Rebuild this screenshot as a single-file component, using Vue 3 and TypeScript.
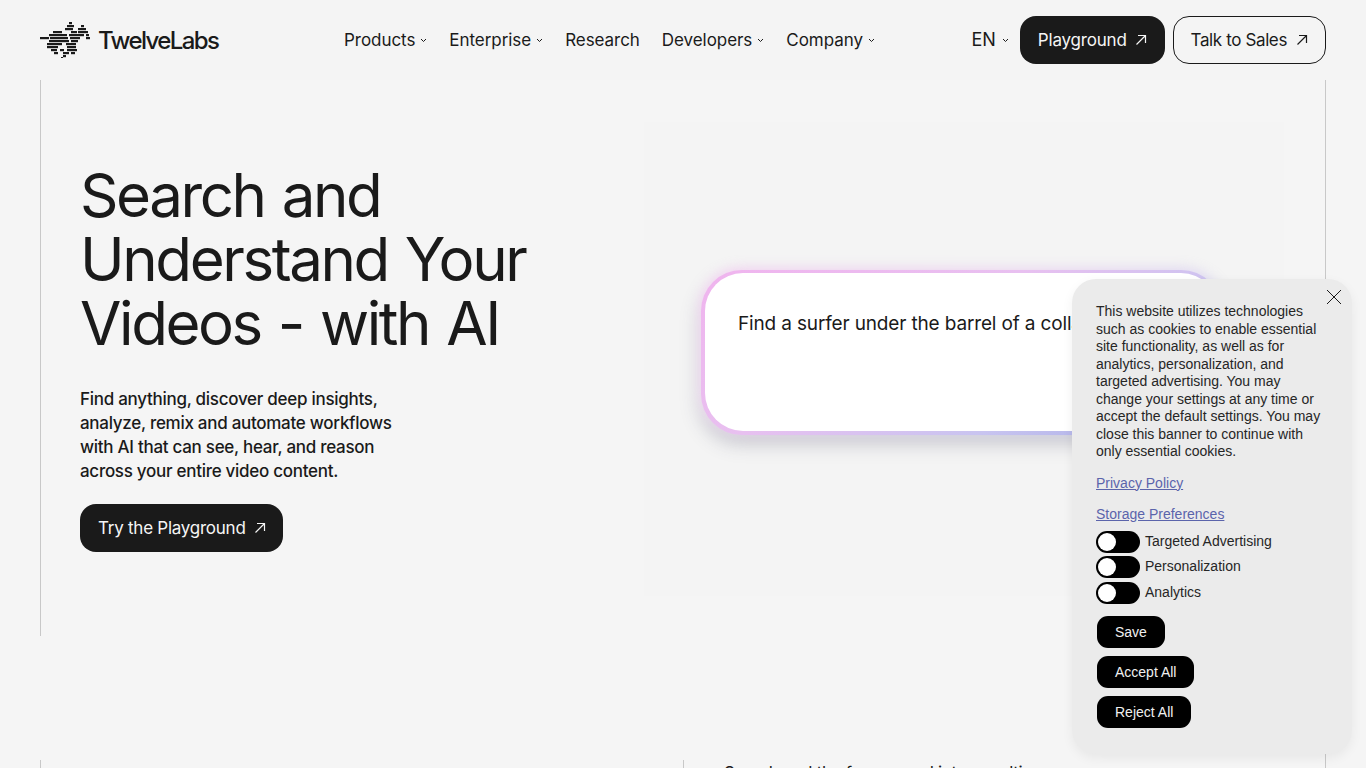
<template>
  <div class="page">
    <header class="nav">
      <a class="logo">
        <svg width="50" height="36" viewBox="0 0 50 36" class="logo-mark">
          <rect v-for="(b, i) in logoBars" :key="i" :x="b[0]" :y="b[1]" :width="b[2]" height="2.200" fill="#1a1a1a" />
        </svg>
        <span class="logo-text">TwelveLabs</span>
      </a>
      <nav class="links">
        <a v-for="link in links" :key="link.label" class="link">
          {{ link.label }}
          <svg v-if="link.menu" class="chev" width="7" height="5" viewBox="0 0 7 5"><path d="M1 1l2.500 2.500L6 1" fill="none" stroke="#1a1a1a" stroke-width="1" /></svg>
        </a>
      </nav>
      <div class="actions">
        <a class="link lang">
          EN
          <svg class="chev" width="7" height="5" viewBox="0 0 7 5"><path d="M1 1l2.500 2.500L6 1" fill="none" stroke="#1a1a1a" stroke-width="1" /></svg>
        </a>
        <a class="btn dark">
          Playground
          <svg width="12" height="12" viewBox="0 0 12 12"><path d="M1.500 10.500L10.500 1.500M3 1.500h7.500V9" fill="none" stroke="currentColor" stroke-width="1.200" /></svg>
        </a>
        <a class="btn outline">
          Talk to Sales
          <svg width="12" height="12" viewBox="0 0 12 12"><path d="M1.500 10.500L10.500 1.500M3 1.500h7.500V9" fill="none" stroke="currentColor" stroke-width="1.200" /></svg>
        </a>
      </div>
    </header>

    <main class="frame">
      <section class="hero">
        <div class="hero-copy">
          <h1>Search and Understand Your Videos - with AI</h1>
          <p>Find anything, discover deep insights, analyze, remix and automate workflows with AI that can see, hear, and reason across your entire video content.</p>
          <a class="btn dark try">
            Try the Playground
            <svg width="12" height="12" viewBox="0 0 12 12"><path d="M1.500 10.500L10.500 1.500M3 1.500h7.500V9" fill="none" stroke="currentColor" stroke-width="1.200" /></svg>
          </a>
        </div>
        <div class="hero-panel">
          <div class="prompt">
            <span class="prompt-text">Find a surfer under the barrel of a collapsing wave</span>
          </div>
        </div>
      </section>
      <section class="next">
        <div class="next-left"></div>
        <div class="next-right">Search and the frames and into a multi</div>
      </section>
    </main>

    <aside class="cookie">
      <button class="close" aria-label="Close">
        <svg width="16" height="16" viewBox="0 0 16 16"><path d="M1 1l14 14M15 1L1 15" stroke="#1a1a1a" stroke-width="1" fill="none" /></svg>
      </button>
      <p class="cookie-text">This website utilizes technologies such as cookies to enable essential site functionality, as well as for analytics, personalization, and targeted advertising. You may change your settings at any time or accept the default settings. You may close this banner to continue with only essential cookies.</p>
      <a class="cookie-link policy">Privacy Policy</a>
      <a class="cookie-link">Storage Preferences</a>
      <div class="toggles">
        <label v-for="t in toggles" :key="t" class="toggle">
          <span class="switch"><span class="knob"></span></span>
          {{ t }}
        </label>
      </div>
      <div class="cookie-btns">
        <button v-for="b in cookieButtons" :key="b" class="cookie-btn">{{ b }}</button>
      </div>
    </aside>
  </div>
</template>

<script setup lang="ts">
const links = [
  { label: "Products", menu: true },
  { label: "Enterprise", menu: true },
  { label: "Research", menu: false },
  { label: "Developers", menu: true },
  { label: "Company", menu: true }
];

const toggles = ["Targeted Advertising", "Personalization", "Analytics"];
const cookieButtons = ["Save", "Accept All", "Reject All"];

// x, y, width of each dash in the logo mark
const logoBars: number[][] = [
  [29, 0, 3],
  [27, 3, 7],
  [41, 3, 3],
  [25, 6, 8],
  [38, 6, 8],
  [13, 9, 9],
  [31, 9, 6],
  [38, 9, 10],
  [9, 12, 18],
  [29, 12, 15],
  [46, 12, 3],
  [0, 15, 9],
  [10, 15, 18],
  [30, 15, 10],
  [46, 15, 4],
  [9, 18, 20],
  [31, 18, 7],
  [7, 21, 15],
  [26, 21, 10],
  [7, 24, 11],
  [27, 24, 9],
  [11, 27, 6],
  [20, 27, 4],
  [27, 27, 10],
  [14, 30, 4],
  [23, 30, 6],
  [31, 30, 4],
  [23, 33, 3],
  [21, 35, 2]
];
</script>

<style>
html,
body {
  margin: 0;
  background: #f5f5f5;
  overflow: hidden;
}
</style>

<style scoped>
.page {
  position: relative;
  height: 768px;
  overflow: hidden;
  background: #f5f5f5;
  color: #1a1a1a;
  font-family: Inter, "Liberation Sans", sans-serif;
}

.nav {
  height: 80px;
  box-sizing: border-box;
  padding: 0 40px;
  display: flex;
  align-items: center;
  background: #f4f4f4;
}

.logo {
  display: flex;
  align-items: center;
  gap: 8px;
  width: 304px;
}

.logo-text {
  font-size: 24px;
  font-weight: 500;
  letter-spacing: -1.6px;
}

.links {
  display: flex;
  gap: 22px;
}

.link {
  display: inline-flex;
  align-items: center;
  gap: 5px;
  font-size: 17px;
  line-height: 24px;
  letter-spacing: -0.05px;
}

.actions {
  margin-left: auto;
  display: flex;
  align-items: center;
  gap: 8px;
}

.lang {
  margin-right: 3px;
  gap: 6px;
  font-size: 18px;
}

.btn {
  height: 48px;
  box-sizing: border-box;
  padding: 0 18px;
  border-radius: 16px;
  display: inline-flex;
  align-items: center;
  gap: 8px;
  font-size: 17px;
  letter-spacing: -0.2px;
}

.dark {
  background: #1a1a1a;
  color: #f5f5f5;
}

.outline {
  padding: 0 17px;
  gap: 9px;
  letter-spacing: -0.38px;
  border: 1px solid #1a1a1a;
}

.frame {
  margin: 0 40px;
  border-right: 1px solid #c8c8c8;
  height: 688px;
  display: flex;
  flex-direction: column;
}

.hero {
  height: 556px;
  box-sizing: border-box;
  border-left: 1px solid #c8c8c8;
  padding: 42px 41px 40px 39px;
  display: flex;
  justify-content: space-between;
}

.hero-copy {
  width: 480px;
  padding-top: 41px;
}

h1 {
  margin: 0;
  font-size: 60px;
  line-height: 64px;
  font-weight: 420;
  letter-spacing: -2.400px;
  word-spacing: 2.500px;
}

.hero-copy p {
  margin: 32px 0 0;
  width: 320px;
  font-size: 17px;
  line-height: 24px;
  font-weight: 450;
  letter-spacing: -0.28px;
}

.try {
  margin-top: 21px;
  padding-right: 17px;
  letter-spacing: -0.25px;
}

.hero-panel {
  width: 640px;
  height: 474px;
  box-sizing: border-box;
  padding-top: 151px;
  padding-left: 61px;
  background: #f4f4f4;
}

.prompt {
  position: relative;
  isolation: isolate;
  width: 514px;
  height: 158px;
  border-radius: 38px;
  font-size: 19px;
  line-height: 24px;
  letter-spacing: -0.15px;
  white-space: nowrap;
}

.prompt::before,
.prompt::after {
  content: "";
  position: absolute;
  inset: -3px -3px -4px -4px;
  border-radius: 41px;
  background: linear-gradient(150deg, #f0b4ee 0%, #e8c0f0 40%, #c8c4f0 70%, #a0a8e4 100%);
  z-index: 0;
}

.prompt::after {
  inset: -5px -4px -2px -5px;
  filter: blur(6px);
  opacity: 0.55;
  z-index: -1;
  box-shadow: 0 10px 16px rgba(60, 60, 90, 0.5);
}

.prompt-text {
  position: relative;
  z-index: 1;
  display: block;
  padding: 39px 33px;
  height: 158px;
  box-sizing: border-box;
  border-radius: 38px;
  background: #fff;
  overflow: hidden;
}

.next {
  margin-top: 124px;
  border-left: 1px solid #c8c8c8;
  display: flex;
  flex: 1;
}

.next-left {
  width: 642px;
  border-right: 1px solid #c8c8c8;
}

.next-right {
  padding: 1px 0 0 40px;
  font-size: 17px;
  line-height: 24px;
  letter-spacing: -0.3px;
}

.cookie {
  position: absolute;
  z-index: 10;
  left: 1072px;
  top: 279px;
  width: 280px;
  height: 475px;
  box-sizing: border-box;
  padding: 24px;
  border-radius: 24px;
  background: #ebebeb;
  box-shadow: 0 4px 12px rgba(0, 0, 0, 0.06);
  font-family: "Liberation Sans", Arial, sans-serif;
  font-size: 14px;
  color: #262626;
}

.close {
  position: absolute;
  top: 10px;
  right: 10px;
  padding: 0;
  border: 0;
  background: none;
  width: 16px;
  height: 16px;
}

.cookie-text {
  margin: 0;
  line-height: 17.500px;
}

.cookie-link {
  display: block;
  margin-top: 14px;
  line-height: 17px;
  color: #5b64ab;
  text-decoration: underline;
}

.toggles {
  margin-top: 5.500px;
}

.toggle {
  display: flex;
  align-items: center;
  gap: 5px;
  height: 25.500px;
}

.switch {
  width: 44px;
  height: 22px;
  margin-top: 2px;
  border-radius: 11px;
  background: #000;
  display: flex;
  align-items: center;
  padding-left: 2px;
  box-sizing: border-box;
}

.knob {
  width: 18px;
  height: 18px;
  border-radius: 50%;
  background: #fff;
}

.cookie-btns {
  margin-top: 10px;
  display: flex;
  flex-direction: column;
  align-items: flex-start;
  gap: 6px;
}

.cookie-btn {
  height: 34px;
  padding: 0 18px;
  border: 1px solid transparent;
  background-clip: padding-box;
  border-radius: 12px;
  background-color: #000;
  color: #f0f0f0;
  font: inherit;
}
</style>
